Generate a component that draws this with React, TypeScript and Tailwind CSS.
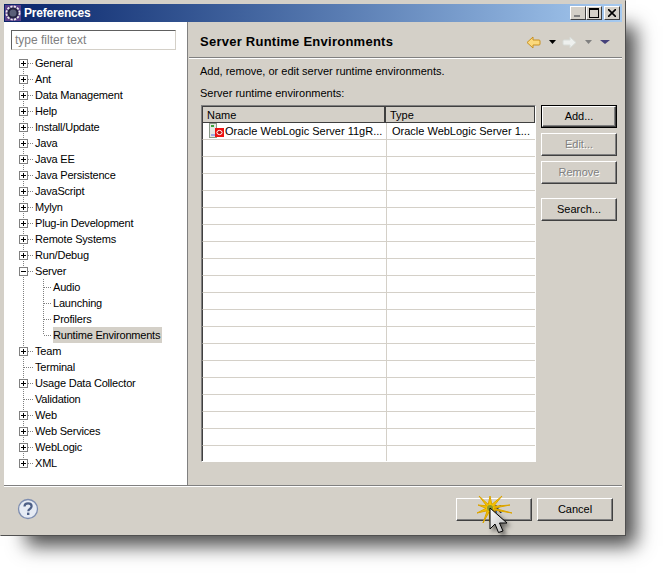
const topItems: { label: string; open?: boolean; leaf?: boolean; kids?: string[] }[] = [
  { label: 'General' },
  { label: 'Ant' },
  { label: 'Data Management' },
  { label: 'Help' },
  { label: 'Install/Update' },
  { label: 'Java' },
  { label: 'Java EE' },
  { label: 'Java Persistence' },
  { label: 'JavaScript' },
  { label: 'Mylyn' },
  { label: 'Plug-in Development' },
  { label: 'Remote Systems' },
  { label: 'Run/Debug' },
  { label: 'Server', open: true, kids: ['Audio', 'Launching', 'Profilers', 'Runtime Environments'] },
  { label: 'Team' },
  { label: 'Terminal', leaf: true },
  { label: 'Usage Data Collector' },
  { label: 'Validation', leaf: true },
  { label: 'Web' },
  { label: 'Web Services' },
  { label: 'WebLogic' },
  { label: 'XML' },
];

// rays of the click star, relative to its centre, clockwise from the top
const rays = [
  [0, -12], [12, -12], [20, -3], [22, 5], [10, 12], [0, 14], [-7, 15], [-13, 5], [-12, -3], [-11, -12],
];

function starPath(cx: number, cy: number) {
  const pts: string[] = [];
  rays.forEach(([x, y], i) => {
    const [nx, ny] = rays[(i + 1) % rays.length];
    pts.push(`${cx + x} ${cy + y}`);
    const mx = nx + x;
    const my = ny + y;
    const d = Math.hypot(mx, my) || 1;
    pts.push(`${(cx + (mx / d) * 4).toFixed(1)} ${(cy + (my / d) * 4).toFixed(1)}`);
  });
  return 'M' + pts.join('L') + 'z';
}

// tree lines + expander box, one row is 16px high
function Gutter({ first, last, leaf, open }: { first?: boolean; last?: boolean; leaf?: boolean; open?: boolean }) {
  return (
    <svg width="20" height="16" className="shrink-0" shapeRendering="crispEdges">
      <line x1="8.5" x2="8.5" y1={first ? 8 : 0} y2={last ? 8 : 16} stroke="#808080" strokeDasharray="1 1" />
      <line x1="9" x2="19" y1="8.5" y2="8.5" stroke="#808080" strokeDasharray="1 1" />
      {!leaf && (
        <>
          <rect x="4.5" y="4.5" width="8" height="8" fill="#fff" stroke="#808080" />
          <line x1="6" x2="11" y1="8.5" y2="8.5" stroke="#000" />
          {!open && <line x1="8.5" x2="8.5" y1="6" y2="11" stroke="#000" />}
        </>
      )}
    </svg>
  );
}

function ChildGutter({ last }: { last: boolean }) {
  return (
    <svg width="38" height="16" className="shrink-0" shapeRendering="crispEdges">
      <line x1="8.5" x2="8.5" y1="0" y2="16" stroke="#808080" strokeDasharray="1 1" />
      <line x1="28.5" x2="28.5" y1="0" y2={last ? 8 : 16} stroke="#808080" strokeDasharray="1 1" />
      <line x1="29" x2="37" y1="8.5" y2="8.5" stroke="#808080" strokeDasharray="1 1" />
    </svg>
  );
}

function Tree() {
  return (
    <div className="pl-[11px] pt-[5px] text-[11px] leading-4 tracking-[-0.2px] text-black">
      {topItems.map((it, i) => (
        <div key={it.label}>
          <div className="flex h-4 items-center">
            <Gutter first={i === 0} last={i === topItems.length - 1} leaf={it.leaf} open={it.open} />
            <span>{it.label}</span>
          </div>
          {it.kids?.map((k, j) => (
            <div key={k} className="flex h-4 items-center">
              <ChildGutter last={j === it.kids!.length - 1} />
              <span className={k === 'Runtime Environments' ? 'bg-[#d4d0c8] pr-[2px]' : ''}>{k}</span>
            </div>
          ))}
        </div>
      ))}
    </div>
  );
}

function Btn({ children, disabled, def, className }: { children?: React.ReactNode; disabled?: boolean; def?: boolean; className?: string }) {
  const bevel = 'border border-t-white border-l-white border-r-[#404040] border-b-[#404040] shadow-[inset_-1px_-1px_0_#808080]';
  return (
    <div className={`${def ? 'border border-black' : ''} w-[76px] ${className ?? ''}`}>
      <div className={`${bevel} ${def ? 'h-[21px]' : 'h-[23px]'} flex items-center justify-center ${disabled ? 'text-[#808080] [text-shadow:1px_1px_0_#fff]' : 'text-black'}`}>
        {children}
      </div>
    </div>
  );
}

function WinBtn({ children, className }: { children: React.ReactNode; className?: string }) {
  return (
    <div className={`h-[14px] w-4 border border-t-white border-l-white border-r-[#404040] border-b-[#404040] bg-[#d4d0c8] flex items-center justify-center ${className ?? ''}`}>
      {children}
    </div>
  );
}

function Arrow({ dir, color, edge }: { dir: 'l' | 'r'; color: string; edge: string }) {
  return (
    <svg width="15" height="13" viewBox="0 0 15 13">
      <path
        d={dir === 'l' ? 'M7 1 1 6.5 7 12V9h6a1 1 0 0 0 1-1V5a1 1 0 0 0-1-1H7z' : 'M8 1l6 5.5L8 12V9H2a1 1 0 0 1-1-1V5a1 1 0 0 1 1-1h6z'}
        fill={color}
        stroke={edge}
      />
    </svg>
  );
}

function Caret({ color, w = 7 }: { color: string; w?: number }) {
  return (
    <svg width={w} height="4" viewBox={`0 0 ${w} 4`} className="block">
      <path d={`M0 0H${w}L${w / 2} 4z`} fill={color} />
    </svg>
  );
}

function ServerIcon() {
  return (
    <svg width="16" height="16" viewBox="0 0 16 16" className="shrink-0">
      <rect x="0.5" y="0.5" width="7" height="14" fill="#e4e8e4" stroke="#8a9a8a" />
      <rect x="2" y="2" width="3" height="2" fill="#3aa03a" />
      <rect x="2" y="11" width="4" height="2" fill="#a0a8e0" />
      <rect x="6" y="5" width="9" height="9" fill="#ee1111" />
      <ellipse cx="10.5" cy="9.5" rx="2.6" ry="2.1" fill="#c01010" stroke="#fff" strokeWidth="1" />
    </svg>
  );
}

function HelpIcon() {
  return (
    <svg width="22" height="22" viewBox="0 0 22 22">
      <circle cx="11" cy="11" r="9.5" fill="#e6ebf4" stroke="#7d8db0" strokeWidth="1.3" />
      <path d="M7.5 8.5c0-2 1.6-3.2 3.6-3.2s3.5 1.2 3.5 3c0 2.6-3.3 2.5-3.3 5" fill="none" stroke="#4d5f86" strokeWidth="2.2" />
      <rect x="10" y="14.6" width="2.4" height="2.4" fill="#4d5f86" />
    </svg>
  );
}

export default function App() {
  return (
    <div className="h-[576px] w-[666px] bg-white font-['Liberation_Sans',sans-serif] text-[11px]">
      <div className="relative flex h-[536px] w-[626px] flex-col border border-t-[#d4d0c8] border-l-[#d4d0c8] border-r-[#505050] border-b-[#505050] bg-[#d4d0c8] p-[3px] shadow-[18px_18px_18px_-8px_rgba(0,0,0,0.7)]">
        {/* Title bar */}
        <div className="flex h-[18px] shrink-0 items-center bg-gradient-to-r from-[#0a246a] to-[#a6caf0] pl-[1px] pr-[2px]">
          <svg width="16" height="16" viewBox="0 0 16 16" className="shrink-0">
            <rect width="16" height="16" fill="#5a3f8a" />
            <circle cx="8" cy="8" r="6.5" fill="none" stroke="#e8e8e8" strokeWidth="2" strokeDasharray="2.2 1.2" />
            <circle cx="8" cy="8" r="5.5" fill="#23233f" />
            <circle cx="8" cy="8" r="3.5" fill="#5a5f78" />
          </svg>
          <span className="ml-[3px] text-[12px] font-bold tracking-[-0.2px] text-white">Preferences</span>
          <div className="ml-auto flex items-center">
            <WinBtn>
              <div className="mt-[6px] mr-[3px] h-[2px] w-[6px] bg-[#808080]" />
            </WinBtn>
            <WinBtn>
              <div className="h-[10px] w-[10px] border border-t-2 border-black" />
            </WinBtn>
            <WinBtn className="ml-[2px]">
              <svg width="8" height="8" viewBox="0 0 8 8">
                <path d="M0 0l8 8M8 0L0 8" stroke="#000" strokeWidth="1.6" />
              </svg>
            </WinBtn>
          </div>
        </div>

        {/* Main */}
        <div className="flex min-h-0 flex-1">
          <div className="w-[183px] shrink-0 bg-white pt-2">
            <div className="ml-[7px] flex h-5 w-[165px] items-center border border-t-[#606060] border-l-[#606060] border-r-[#d4d0c8] border-b-[#d4d0c8] pl-[3px] text-[12px] text-[#808080]">
              type filter text
            </div>
            <Tree />
          </div>

          <div className="flex min-w-0 flex-1 flex-col border-l border-[#808080] pl-[1px]">
            <div className="flex h-[37px] shrink-0 items-center border-b border-b-white pl-[11px] pr-[12px] pt-[4px] shadow-[inset_0_-1px_0_#808080]">
              <span className="text-[13px] font-bold tracking-[0.25px] text-black">Server Runtime Environments</span>
              <div className="ml-auto flex items-center">
                <Arrow dir="l" color="#fbd97c" edge="#c89020" />
                <span className="ml-[8px]"><Caret color="#000" /></span>
                <span className="ml-[6px]"><Arrow dir="r" color="#eef0ee" edge="#d8dcd8" /></span>
                <span className="ml-[8px]"><Caret color="#808080" /></span>
                <span className="ml-[8px]"><Caret color="#45417a" w={10} /></span>
              </div>
            </div>

            <div className="flex min-h-0 flex-1 flex-col pl-[11px] pr-[5px]">
              <div className="mt-[4px] h-4 leading-4">Add, remove, or edit server runtime environments.</div>
              <div className="mt-[6px] h-4 leading-4">Server runtime environments:</div>
              <div className="ml-[1px] mt-[4px] flex gap-[5px]">
                {/* Table */}
                <div className="h-[357px] w-[335px] shrink-0 overflow-hidden border border-t-[#808080] border-l-[#808080] border-r-white border-b-white bg-white">
                  <div className="flex h-[17px] border border-[#404040] border-t-[#404040] bg-[#d4d0c8]">
                    <div className="w-[183px] border-r-2 border-[#404040] pl-[4px] leading-4">Name</div>
                    <div className="flex-1 pl-[4px] leading-4">Type</div>
                  </div>
                  <div className="flex h-[17px] items-center border-b border-l border-[#d4d0c8] border-l-[#404040]">
                    <div className="flex h-[16px] w-[184px] items-center border-r border-[#d4d0c8] pl-[6px]">
                      <ServerIcon />
                      <span>Oracle WebLogic Server 11gR...</span>
                    </div>
                    <div className="pl-[5px]">Oracle WebLogic Server 1...</div>
                  </div>
                  {Array.from({ length: 19 }).map((_, i) => (
                    <div key={i} className="flex h-[17px] border-b border-l border-[#d4d0c8] border-l-[#404040]">
                      <div className="w-[184px] border-r border-[#d4d0c8]" />
                    </div>
                  ))}
                </div>

                {/* Side buttons */}
                <div className="flex flex-col">
                  <Btn def>Add...</Btn>
                  <Btn disabled className="mt-[5px]">Edit...</Btn>
                  <Btn disabled className="mt-[5px]">Remove</Btn>
                  <Btn className="mt-[14px]">Search...</Btn>
                </div>
              </div>
            </div>
          </div>
        </div>

        {/* Footer */}
        <div className="flex h-[47px] shrink-0 items-center border-t border-t-[#808080] pr-[9px] pl-[13px] shadow-[inset_0_1px_0_#fff]">
          <HelpIcon />
          <div className="ml-auto flex gap-[5px]">
            <Btn>OK</Btn>
            <Btn>Cancel</Btn>
          </div>
        </div>

        {/* Click star + mouse pointer */}
        <svg width="44" height="44" viewBox="0 0 44 44" className="absolute left-[474px] top-[490px] overflow-visible">
          <defs>
            <linearGradient id="ptr" x1="0" y1="0" x2="1" y2="1">
              <stop offset="0" stopColor="#ffffff" />
              <stop offset="1" stopColor="#b4b4b4" />
            </linearGradient>
          </defs>
          <path d={starPath(15, 17)} fill="#f7c600" stroke="#dca400" strokeWidth="1" />
          <circle cx="15" cy="17" r="3" fill="#8f9a30" />
          <path
            d="M15 17v21l5-5 3.5 8.5 4.5-1.5-3.5-8h7.5z"
            fill="url(#ptr)"
            stroke="#000"
            strokeWidth="1"
            className="drop-shadow-[3px_3px_2px_rgba(0,0,0,0.5)]"
          />
        </svg>
      </div>
    </div>
  );
}
